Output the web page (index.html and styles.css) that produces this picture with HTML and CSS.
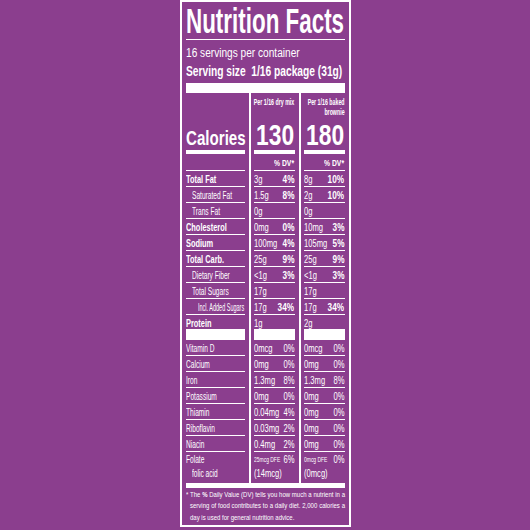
FILE: index.html
```html
<!DOCTYPE html>
<html lang="en">
<head>
<meta charset="UTF-8">
<meta name="viewport" content="width=device-width, initial-scale=1.0">
<title>Nutrition Facts</title>
<link rel="stylesheet" href="styles.css">
</head>
<body>

<div class="label">
  <h1 class="title"><span class="sq">Nutrition Facts</span></h1>
  <p class="servings"><span class="sq">16 servings per container</span></p>
  <p class="size"><span class="sq">Serving size&nbsp; 1/16 package (31g)</span></p>
  <div class="bar"></div>

  <div class="facts">
    <!-- nutrient names -->
    <div class="names">
      <div class="hd"></div>
      <div class="cal"><span class="sq">Calories</span></div>
      <div class="dv"></div>
      <div class="row"><b class="sq">Total Fat</b></div>
      <div class="row in"><span class="sq">Saturated Fat</span></div>
      <div class="row in"><span class="sq">Trans Fat</span></div>
      <div class="row"><b class="sq">Cholesterol</b></div>
      <div class="row"><b class="sq">Sodium</b></div>
      <div class="row"><b class="sq">Total Carb.</b></div>
      <div class="row in"><span class="sq">Dietary Fiber</span></div>
      <div class="row in"><span class="sq">Total Sugars</span></div>
      <div class="row in2"><span class="sq tight">Incl. Added Sugars</span></div>
      <div class="row last"><b class="sq">Protein</b></div>
      <div class="gap"></div>
      <div class="row"><span class="sq">Vitamin D</span></div>
      <div class="row"><span class="sq">Calcium</span></div>
      <div class="row"><span class="sq">Iron</span></div>
      <div class="row"><span class="sq">Potassium</span></div>
      <div class="row"><span class="sq">Thiamin</span></div>
      <div class="row"><span class="sq">Riboflavin</span></div>
      <div class="row"><span class="sq">Niacin</span></div>
      <div class="row open"><span class="sq">Folate</span></div>
      <div class="row in tail"><span class="sq">folic acid</span></div>
    </div>

    <!-- per 1/16 dry mix -->
    <div class="col">
      <div class="hd"><span class="sq end">Per 1/16 dry mix</span></div>
      <div class="cal"><span class="sq end">130</span></div>
      <div class="dv"><span class="sq end">% DV*</span></div>
      <div class="row"><span class="sq amt">3g</span><b class="sq pct">4%</b></div>
      <div class="row"><span class="sq amt">1.5g</span><b class="sq pct">8%</b></div>
      <div class="row"><span class="sq amt">0g</span></div>
      <div class="row"><span class="sq amt">0mg</span><b class="sq pct">0%</b></div>
      <div class="row"><span class="sq amt">100mg</span><b class="sq pct">4%</b></div>
      <div class="row"><span class="sq amt">25g</span><b class="sq pct">9%</b></div>
      <div class="row"><span class="sq amt">&lt;1g</span><b class="sq pct">3%</b></div>
      <div class="row"><span class="sq amt">17g</span></div>
      <div class="row"><span class="sq amt">17g</span><b class="sq pct">34%</b></div>
      <div class="row last"><span class="sq amt">1g</span></div>
      <div class="gap"></div>
      <div class="row"><span class="sq amt">0mcg</span><span class="sq pct">0%</span></div>
      <div class="row"><span class="sq amt">0mg</span><span class="sq pct">0%</span></div>
      <div class="row"><span class="sq amt">1.3mg</span><span class="sq pct">8%</span></div>
      <div class="row"><span class="sq amt">0mg</span><span class="sq pct">0%</span></div>
      <div class="row"><span class="sq amt">0.04mg</span><span class="sq pct">4%</span></div>
      <div class="row"><span class="sq amt">0.03mg</span><span class="sq pct">2%</span></div>
      <div class="row"><span class="sq amt">0.4mg</span><span class="sq pct">2%</span></div>
      <div class="row open"><span class="sq amt dfe">25mcg DFE</span><span class="sq pct">6%</span></div>
      <div class="row tail"><span class="sq amt">(14mcg)</span></div>
    </div>

    <!-- per 1/16 baked brownie -->
    <div class="col">
      <div class="hd"><span class="sq end">Per 1/16 baked</span><span class="sq end">brownie</span></div>
      <div class="cal"><span class="sq end">180</span></div>
      <div class="dv"><span class="sq end">% DV*</span></div>
      <div class="row"><span class="sq amt">8g</span><b class="sq pct">10%</b></div>
      <div class="row"><span class="sq amt">2g</span><b class="sq pct">10%</b></div>
      <div class="row"><span class="sq amt">0g</span></div>
      <div class="row"><span class="sq amt">10mg</span><b class="sq pct">3%</b></div>
      <div class="row"><span class="sq amt">105mg</span><b class="sq pct">5%</b></div>
      <div class="row"><span class="sq amt">25g</span><b class="sq pct">9%</b></div>
      <div class="row"><span class="sq amt">&lt;1g</span><b class="sq pct">3%</b></div>
      <div class="row"><span class="sq amt">17g</span></div>
      <div class="row"><span class="sq amt">17g</span><b class="sq pct">34%</b></div>
      <div class="row last"><span class="sq amt">2g</span></div>
      <div class="gap"></div>
      <div class="row"><span class="sq amt">0mcg</span><span class="sq pct">0%</span></div>
      <div class="row"><span class="sq amt">0mg</span><span class="sq pct">0%</span></div>
      <div class="row"><span class="sq amt">1.3mg</span><span class="sq pct">8%</span></div>
      <div class="row"><span class="sq amt">0mg</span><span class="sq pct">0%</span></div>
      <div class="row"><span class="sq amt">0mg</span><span class="sq pct">0%</span></div>
      <div class="row"><span class="sq amt">0mg</span><span class="sq pct">0%</span></div>
      <div class="row"><span class="sq amt">0mg</span><span class="sq pct">0%</span></div>
      <div class="row open"><span class="sq amt dfe">0mcg DFE</span><span class="sq pct">0%</span></div>
      <div class="row tail"><span class="sq amt">(0mcg)</span></div>
    </div>
  </div>

  <div class="rule"></div>

  <div class="foot">
    <p class="jl first">* The <b>%</b> Daily Value (DV) tells you how much a nutrient in a</p>
    <p class="jl">serving of food contributes to a daily diet. 2,000 calories a</p>
    <p>day is used for general nutrition advice.</p>
  </div>
</div>

</body>
</html>
```

FILE: styles.css
```css
/* General styles */
* {
  box-sizing: border-box;
}

body {
  margin: 0;
  background-color: #8b3e8e;
  color: #fff;
  font-family: "Liberation Sans", Arial, sans-serif;
}

/* condensed type: the label face is a narrow grotesque */
.sq {
  display: inline-block;
  white-space: nowrap;
  transform: scaleX(var(--sx, .76));
  transform-origin: 0 50%;
}

.sq.end,
.sq.pct {
  transform-origin: 100% 50%;
}

/* Label box */
.label {
  width: 171px;
  margin: 0 auto;
  padding: 0 4px 2px;
  border: 2px solid #fff;
}

.title {
  height: 38px;
  margin: 0;
  border-bottom: 1px solid #fff;
  font-size: 35px;
  line-height: 37px;
  font-weight: 700;
  --sx: .64;
}

.servings {
  margin: 0;
  padding-top: 6px;
  font-size: 12.5px;
  line-height: 14px;
  --sx: .81;
}

.size {
  margin: 0;
  padding-top: 3px;
  font-size: 14px;
  line-height: 16px;
  font-weight: 700;
  --sx: .73;
}

.bar {
  height: 10px;
  margin-top: 4px;
  background-color: #fff;
}

/* Table */
.facts {
  display: flex;
}

.names {
  flex: none;
  width: 59px;
  min-width: 0;
}

.col {
  flex: none;
  width: 46px;
  min-width: 0;
  margin-left: 4px;
  padding-left: 3px;
  border-left: 2px solid #fff;
}

.hd {
  display: flex;
  flex-direction: column;
  align-items: flex-end;
  height: 26px;
  padding-top: 3.5px;
  font-size: 8.5px;
  line-height: 10px;
  font-weight: 700;
  --sx: .62;
}

.cal {
  height: 35px;
  border-bottom: 4px solid #fff;
  font-weight: 700;
}

.names .cal {
  padding-top: 7.5px;
  font-size: 21px;
  line-height: 22px;
  --sx: .72;
}

.col .cal {
  display: flex;
  justify-content: flex-end;
  font-size: 30px;
  line-height: 31px;
  --sx: .76;
}

.dv {
  display: flex;
  justify-content: flex-end;
  height: 17px;
  padding-top: 4px;
  border-bottom: 1px solid #fff;
  font-size: 8.5px;
  line-height: 10px;
  font-weight: 700;
  --sx: .8;
}

.row {
  display: flex;
  height: 16px;
  padding-top: 1.5px;
  border-bottom: 1px solid #fff;
  font-size: 10px;
  line-height: 13px;
}

.names .row {
  --sx: .66;
}

.names b {
  --sx: .74;
}

.in {
  padding-left: 6px;
}

.in2 {
  padding-left: 12px;
}

.sq.tight {
  --sx: .55;
}

.row.last {
  height: 14px;
  border-bottom: 0;
}

.row.open {
  height: 14px;
  padding-top: .5px;
  border-bottom: 0;
}

.row.tail {
  height: 17px;
  padding-top: .5px;
  border-bottom: 0;
}

.gap {
  height: 11px;
  background-color: #fff;
}

.amt {
  flex: 1 1 0;
  min-width: 0;
}

.pct {
  flex: none;
}

b.pct {
  --sx: .82;
}

.amt.dfe {
  font-size: 8px;
  --sx: .62;
}

/* Footnote */
.rule {
  height: 5px;
  background-color: #fff;
}

.foot {
  width: calc(100% / .75);
  padding: .5px 0 0 5.3px;
  font-size: 8px;
  line-height: 11.5px;
  transform: scaleX(.75);
  transform-origin: 0 0;
}

.foot p {
  margin: 0;
}

.foot .jl {
  text-align: justify;
  text-align-last: justify;
}

.foot .first {
  margin-left: -5.3px;
}
```
